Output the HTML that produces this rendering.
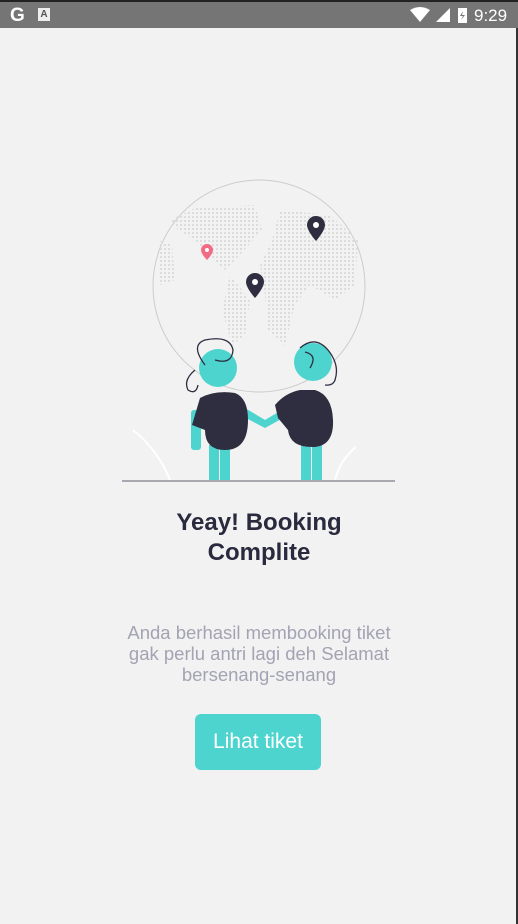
<!DOCTYPE html>
<html><head><meta charset="utf-8"><style>
body{margin:0;width:518px;height:924px;background:#f2f2f2;font-family:"Liberation Sans",sans-serif;position:relative;overflow:hidden}
.sb{position:absolute;top:0;left:0;width:518px;height:28px;background:#757575;border-top:2px solid #222;box-sizing:border-box;color:#fff}
.t{position:absolute;left:0;width:518px;text-align:center}
</style></head><body>
<div class="sb">
<div style="position:absolute;left:10px;top:3px;font-weight:bold;font-size:19px">G</div>
<div style="position:absolute;left:38px;top:6px;width:12px;height:13px;background:#eee;color:#555;font-size:10px;text-align:center;line-height:13px;font-weight:bold">A</div>
<svg style="position:absolute;left:410px;top:5px" width="70" height="18"><path d="M0 3 Q10 -3 20 3 L10 15Z" fill="#fff"/><path d="M26 15 L40 1 L40 15Z" fill="#fff"/><rect x="48" y="1" width="9" height="15" fill="#fff"/><path d="M53 4 L50 9 L53 9 L51 13 L55 8 L52 8Z" fill="#757575"/></svg>
<div style="position:absolute;left:474px;top:4px;font-size:17px">9:29</div>
</div>
<div style="position:absolute;right:0;top:28px;width:2px;height:896px;background:#333"></div>
<svg style="position:absolute;left:0;top:0" width="518" height="924">
<defs><pattern id="d" width="4" height="4" patternUnits="userSpaceOnUse"><rect width="2" height="2" fill="#dcdcdc"/></pattern></defs>
<circle cx="259" cy="286" r="106" fill="none" stroke="#ccc" stroke-width="1"/>
<path d="M195 208 L255 205 L262 230 L240 255 L225 270 L215 262 L195 240 L178 230 L170 220Z" fill="url(#d)"/>
<path d="M230 275 L250 300 L245 335 L232 345 L222 310Z" fill="url(#d)"/>
<path d="M280 210 L330 215 L358 240 L355 285 L335 300 L310 285 L295 305 L285 345 L268 330 L265 295 L260 265 L272 240Z" fill="url(#d)"/>
<path d="M158 240 L172 245 L175 280 L160 285Z" fill="url(#d)"/>
<path d="M207 244a6 6 0 0 1 6 6c0 4-6 10-6 10s-6-6-6-10a6 6 0 0 1 6-6z" fill="#f26b84"/><circle cx="207" cy="250" r="2" fill="#fff"/>
<path d="M316 216a9 9 0 0 1 9 9c0 6-9 16-9 16s-9-10-9-16a9 9 0 0 1 9-9z" fill="#2f2e41"/><circle cx="316" cy="225" r="3" fill="#fff"/>
<path d="M255 273a9 9 0 0 1 9 9c0 6-9 16-9 16s-9-10-9-16a9 9 0 0 1 9-9z" fill="#2f2e41"/><circle cx="255" cy="282" r="3" fill="#fff"/>
<path d="M133 430 Q158 450 170 480" stroke="#fff" stroke-width="2" fill="none"/>
<path d="M356 447 Q340 460 335 480" stroke="#fff" stroke-width="2" fill="none"/>
<rect x="209" y="445" width="10" height="36" fill="#4dd4cf"/><rect x="220" y="445" width="10" height="36" fill="#4dd4cf"/>
<rect x="301" y="440" width="10" height="41" fill="#4dd4cf"/><rect x="312" y="440" width="10" height="41" fill="#4dd4cf"/>
<rect x="191" y="410" width="10" height="40" rx="3" fill="#4dd4cf"/>
<path d="M240 405 L265 420 L290 405 L292 413 L265 428 L240 415Z" fill="#4dd4cf"/>
<path d="M200 398 Q215 390 235 393 Q248 398 248 420 Q248 450 225 450 Q205 450 205 430 L192 425Z" fill="#2f2e41"/>
<path d="M275 405 Q285 393 300 390 L315 390 Q332 395 333 420 Q334 445 315 447 Q290 448 288 430 L278 418Z" fill="#2f2e41"/>
<circle cx="218" cy="368" r="19" fill="#4dd4cf"/><circle cx="313" cy="362" r="19" fill="#4dd4cf"/>
<path d="M205 365 Q190 345 205 340 Q230 335 233 350 Q232 365 215 360 M195 370 Q183 380 188 390 Q196 395 198 385" stroke="#2f2e41" stroke-width="1.3" fill="none"/>
<path d="M300 348 Q315 335 328 350 Q340 365 335 380 Q333 386 325 385 M305 352 Q318 355 310 368" stroke="#2f2e41" stroke-width="1.3" fill="none"/>
<line x1="122" y1="481" x2="395" y2="481" stroke="#a8a8b0" stroke-width="2"/>
</svg>
<div class="t" style="top:508px;font-size:24px;font-weight:bold;line-height:30px;color:#2a2a3e">Yeay! Booking<br>Complite</div>
<div class="t" style="top:622px;font-size:18.5px;line-height:21px;color:#a3a3b3">Anda berhasil membooking tiket<br>gak perlu antri lagi deh Selamat<br>bersenang-senang</div>
<div style="position:absolute;left:195px;top:714px;width:126px;height:56px;background:#4dd4cf;border-radius:6px;color:#fff;font-size:21px;line-height:56px;text-align:center">Lihat tiket</div>
</body></html>
